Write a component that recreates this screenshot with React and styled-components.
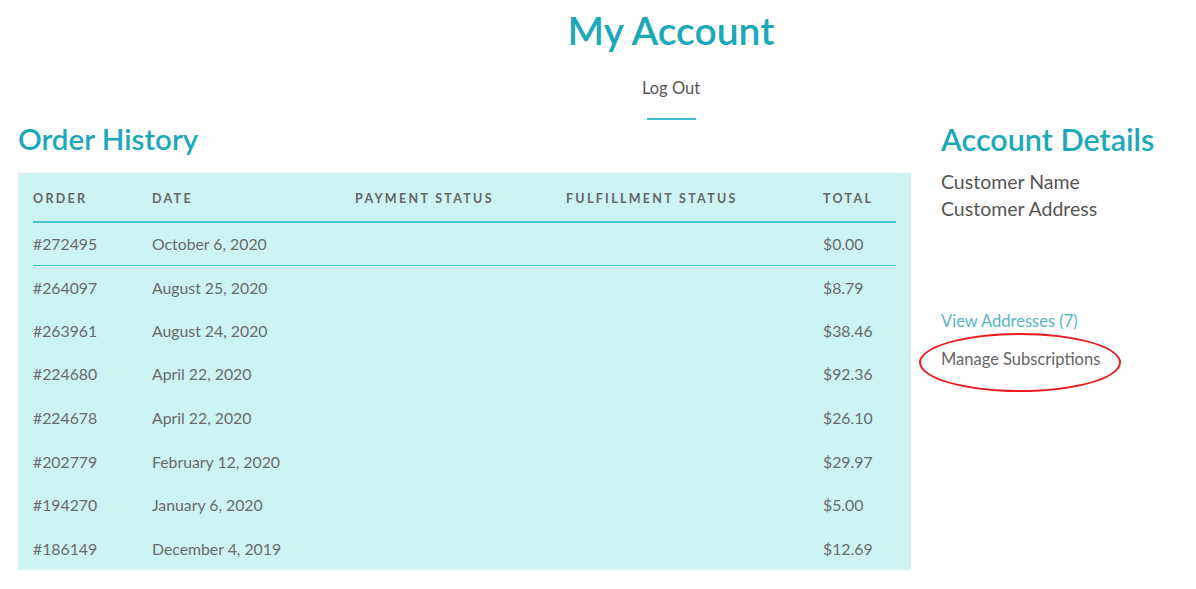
import styled, { createGlobalStyle } from 'styled-components';

const GlobalStyle = createGlobalStyle`
  body {
    margin: 0;
    background: #fff;
    font-family: Lato, "Open Sans", sans-serif;
    color: #666;
  }
`;

const orders = [
  { id: '#272495', date: 'October 6, 2020', total: '$0.00' },
  { id: '#264097', date: 'August 25, 2020', total: '$8.79' },
  { id: '#263961', date: 'August 24, 2020', total: '$38.46' },
  { id: '#224680', date: 'April 22, 2020', total: '$92.36' },
  { id: '#224678', date: 'April 22, 2020', total: '$26.10' },
  { id: '#202779', date: 'February 12, 2020', total: '$29.97' },
  { id: '#194270', date: 'January 6, 2020', total: '$5.00' },
  { id: '#186149', date: 'December 4, 2019', total: '$12.69' },
];

const Page = styled.div`
  width: 1196px;
  height: 589px;
  overflow: hidden;
`;

const Header = styled.header`
  display: flex;
  flex-direction: column;
  align-items: center;
  padding: 7px 0 0 146px;
`;

const Title = styled.h1`
  margin: 0;
  font-size: 39px;
  font-weight: 600;
  color: #1ba8b9;
  line-height: 46px;
`;

const LogOut = styled.a`
  margin-top: 25px;
  font-size: 16.5px;
  color: #555;
  text-decoration: none;
  line-height: 20px;
`;

const Rule = styled.div`
  width: 49px;
  height: 2px;
  background: #3cbfcf;
  margin-top: 20px;
`;

const Columns = styled.div`
  display: grid;
  grid-template-columns: 893px 1fr;
  column-gap: 30px;
  padding-left: 18px;
  margin-top: 1px;
`;

const SectionTitle = styled.h2`
  margin: 0;
  font-size: ${(p) => p.$size || '29.5px'};
  font-weight: 600;
  color: #1ba8b9;
  line-height: 36px;
`;

const TableBox = styled.div`
  margin-top: 16px;
  background: #cdf3f3;
  padding: 0 15px;
`;

const Table = styled.table`
  width: 100%;
  border-collapse: collapse;
`;

const Th = styled.th`
  text-align: left;
  font-size: 12.5px;
  font-weight: 700;
  letter-spacing: 2.3px;
  color: #666;
  height: 46px;
  padding: 2px 0 0;
  border-bottom: 2px solid #4cc4d2;
  width: ${(p) => p.$w || 'auto'};
`;

const Row = styled.tr`
  height: ${(p) => (p.$ruled ? '43px' : '43.6px')};
  border-bottom: ${(p) => (p.$ruled ? '1px solid #4cc4d2' : 'none')};
`;

const Td = styled.td`
  padding: 0;
  font-size: 15.8px;
  color: #6a6a6a;
`;

const Side = styled.aside`
  display: flex;
  flex-direction: column;
  align-items: flex-start;
`;

const Info = styled.p`
  margin: 11px 0 0;
  font-size: 19.5px;
  line-height: 27px;
  color: #555;
`;

const LinkTeal = styled.a`
  margin-top: 89px;
  font-size: 16.5px;
  color: #58b6c7;
  text-decoration: none;
  line-height: 20px;
`;

const LinkGrey = styled.a`
  position: relative;
  margin-top: 18px;
  font-size: 16.5px;
  color: #666;
  text-decoration: none;
  line-height: 20px;
`;

const Circle = styled.span`
  position: absolute;
  left: -22px;
  top: -16px;
  width: 198px;
  height: 55px;
  border: 2px solid #e81c1c;
  border-radius: 50%;
  pointer-events: none;
`;

export default function App() {
  return (
    <Page>
      <GlobalStyle />
      <Header>
        <Title>My Account</Title>
        <LogOut href="#">Log Out</LogOut>
        <Rule />
      </Header>
      <Columns>
        <section>
          <SectionTitle>Order History</SectionTitle>
          <TableBox>
            <Table>
              <thead>
                <tr>
                  <Th $w="119px">ORDER</Th>
                  <Th $w="203px">DATE</Th>
                  <Th $w="211px">PAYMENT STATUS</Th>
                  <Th $w="257px">FULFILLMENT STATUS</Th>
                  <Th>TOTAL</Th>
                </tr>
              </thead>
              <tbody>
                {orders.map((o, i) => (
                  <Row key={o.id} $ruled={i === 0}>
                    <Td>{o.id}</Td>
                    <Td>{o.date}</Td>
                    <Td />
                    <Td />
                    <Td>{o.total}</Td>
                  </Row>
                ))}
              </tbody>
            </Table>
          </TableBox>
        </section>
        <Side>
          <SectionTitle $size="30.5px">Account Details</SectionTitle>
          <Info>
            Customer Name
            <br />
            Customer Address
          </Info>
          <LinkTeal href="#">View Addresses (7)</LinkTeal>
          <LinkGrey href="#">
            Manage Subscriptions
            <Circle />
          </LinkGrey>
        </Side>
      </Columns>
    </Page>
  );
}
